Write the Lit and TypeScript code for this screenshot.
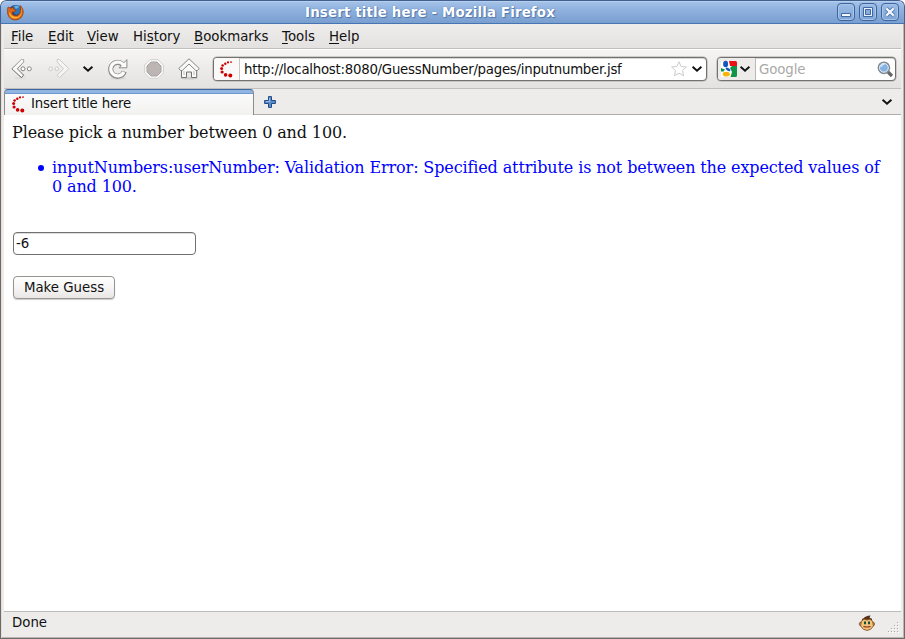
import { LitElement, html, css, svg } from "lit";
import { customElement, property } from "lit/decorators.js";

const loaderDots = svg`<g fill="#cc0000">
  <circle cx="5.3" cy="2.8" r="1.2"/><circle cx="8" cy="1.4" r="1.1"/><circle cx="11" cy="1.1" r=".9"/>
  <circle cx="2.6" cy="4.5" r="1.3"/><circle cx="1.6" cy="7.6" r="1.5"/><circle cx="2.1" cy="11" r="1.6"/>
  <circle cx="5.6" cy="13.9" r="1.8"/><circle cx="10.3" cy="14.6" r="2"/></g>`;

@customElement("ui-icon")
class UiIcon extends LitElement {
  @property() name = "";
  static styles = css`
    :host { display: block; flex: none; }
    svg { display: block; width: 100%; height: 100%; overflow: visible; }
  `;
  shape() {
    switch (this.name) {
      case "firefox": return svg`<svg viewBox="0 0 17 17">
        <circle cx="8.5" cy="8" r="7" fill="#1e4782"/><path d="M6 2q6-2 8 2v5l-5 2-4-4z" fill="#2f75b5"/><path d="M7 2q4-1 5 1L9 5z" fill="#68b4df"/>
        <path d="M1 3Q0 6 .7 10Q2.5 16 9 16Q15.7 15 16.3 8Q16.4 4.5 13.2 1.4Q14.2 7 12.8 9.2Q11 12.5 7.5 11.5Q4.8 10.7 5 8.2L8 7.8L8.8 6L6.6 5.2L6.4 3L4 4.3Z" fill="#dc6517" stroke="#97390d" stroke-width=".7"/>
        <path d="M2 10Q4 15 9 14.5Q14.5 13.5 15 7Q15.3 5 14.5 4Q15 9 12.7 11.4Q10 14 6 12.3Q3 11 3 7.5z" fill="#ffb52c"/></svg>`;
      case "back": return svg`<svg viewBox="0 0 22 22"><defs><linearGradient id="a" x2="0" y2="1"><stop stop-color="#aaa"/><stop offset="1" stop-color="#555"/></linearGradient></defs>
        <ellipse cx="9" cy="20" rx="6" ry="1.3" fill="#ddd"/>
        <path d="M10.3 1.5L.8 10.8L10.3 19.5L12.7 17.2L6.3 10.8L12.7 4V1.5Z" fill="#f8f8f7" stroke="url(#a)" stroke-width="1"/>
        <circle cx="12" cy="10.8" r="2" fill="#fff" stroke="#858585"/><circle cx="18.3" cy="10.8" r="2" fill="#fff" stroke="#858585"/></svg>`;
      case "forward": return svg`<svg viewBox="0 0 22 22"><g fill="#f5f5f4" stroke="#cbcbc9"><path d="M11.5 1.5L20.8 10.8L11.5 19.5L9.2 17.2L15.5 10.8L9.2 4V1.5Z"/><circle cx="2.7" cy="10.8" r="1.8"/><circle cx="8.8" cy="10.8" r="1.8"/></g></svg>`;
      case "reload": return svg`<svg viewBox="0 0 22 22"><ellipse cx="11" cy="20.4" rx="8" ry="1.3" fill="#d8d8d6"/>
        <path d="M15.6 6.6A6.9 6.9 0 1 0 17.2 13.4" fill="none" stroke="#8b8b89" stroke-width="5.2"/>
        <path d="M12 9.8H19.9V1.6Z" fill="#fbfbfa" stroke="#8b8b89" stroke-linejoin="round"/>
        <path d="M17 8.2A6.9 6.9 0 1 0 16.9 14" fill="none" stroke="#fbfbfa" stroke-width="3.2"/></svg>`;
      case "stop": return svg`<svg viewBox="0 0 20 20"><path d="M6 .6H14L19.4 6V14L14 19.4H6L.6 14V6Z" fill="#f8f8f8" stroke="#d2d2d0"/><path d="M7 3H13L17 7V13L13 17H7L3 13V7Z" fill="#bdb4b4" stroke="#aaa4a4"/></svg>`;
      case "home": return svg`<svg viewBox="0 0 22 22"><ellipse cx="11" cy="20.3" rx="9" ry="1.2" fill="#ccc"/>
        <path d="M3.5 11.5V19.5H8.5V14H13.5V19.5H18.7V11L11 4Z" fill="#fafafa" stroke="#70706e"/><path d="M.8 10.5L11 .8L21.2 10.5L19.4 12.5H17.8L11 6L4.2 12.5H2.5Z" fill="#fafafa" stroke="#858583"/><path d="M6 13V17M16 13V17" fill="none" stroke="#bbb"/></svg>`;
      case "chevron": return svg`<svg viewBox="0 0 10 6"><path d="M.6 .8L5 4.7L9.4 .8" fill="none" stroke="#111" stroke-width="2"/></svg>`;
      case "loader": return svg`<svg viewBox="0 0 13 17">${loaderDots}</svg>`;
      case "star": return svg`<svg viewBox="0 0 16 16"><path d="M8 .8L10.2 5.5L15.4 6L11.5 9.6L12.6 14.8L8 12.2L3.4 14.8L4.5 9.6L.6 6L5.8 5.5Z" fill="#fff" stroke="#cbcbcb"/></svg>`;
      case "google": return svg`<svg viewBox="0 0 16 16"><path d="M0 0H14.5Q16 0 16 1.5V14.5Q16 16 14.5 16H0Z" fill="#fff"/><path d="M8 0H14.5Q16 0 16 1.5V5H9Z" fill="#e11"/><path d="M11 5H16V14.5Q16 16 14.5 16H9.5L11 11L9 7Z" fill="#109447"/><path d="M0 7L4 8.5L2.5 10.5H0Z" fill="#109447"/>
        <ellipse cx="4.6" cy="3" rx="2.5" ry="3.3" fill="#1458bd"/><ellipse cx="7" cy="8.4" rx="2.7" ry="1.4" transform="rotate(32 7 8.4)" fill="#1458bd"/><ellipse cx="5.3" cy="13.2" rx="3.5" ry="2.4" fill="#f5b50b"/></svg>`;
      case "search": return svg`<svg viewBox="0 0 17 17"><path d="M10.5 10.5L15 15" stroke="#666" stroke-width="3.2"/><circle cx="6.9" cy="6.8" r="5.5" fill="#86b3e4" stroke="#858b91" stroke-width="1.7"/><circle cx="6.9" cy="6.8" r="4.4" fill="none" stroke="#e5eff9"/><path d="M3.8 6Q4.6 3 7.5 3.3" fill="none" stroke="#cde3f8" stroke-width="1.6"/></svg>`;
      case "plus": return svg`<svg viewBox="0 0 12 12"><path d="M4.5.6H7.5V4.5H11.4V7.5H7.5V11.4H4.5V7.5H.6V4.5H4.5Z" fill="#5c8dcb" stroke="#204a87" stroke-linejoin="round"/><path d="M5.5 2V5.5H2" fill="none" stroke="#9bbde5"/></svg>`;
      case "monkey": return svg`<svg viewBox="0 0 16 16"><path d="M5 3Q6 1 11.5.5L10.5 2.7L13 3.7V6H3V4Z" fill="#562f19"/><circle cx="2" cy="9" r="1.8" fill="#d69a51" stroke="#704019" stroke-width=".7"/><circle cx="13.8" cy="9" r="1.8" fill="#d69a51" stroke="#704019" stroke-width=".7"/>
        <path d="M2.4 6Q5 3 8 5Q11 3 13.6 6L14.4 11Q12 15.4 8 15.4T1.6 11Z" fill="#f2c47a" stroke="#88501f" stroke-width=".9"/><path d="M5 6.4H7V9.3H5ZM9 6.4H11V9.3H9Z" fill="#164d3d"/><path d="M4.4 11.5Q8 12.5 11.6 11.5" fill="none" stroke="#8e2b20" stroke-width="1.1"/></svg>`;
      case "grip": return svg`<svg viewBox="0 0 12 12">${[[9,0],[6,3],[9,3],[3,6],[6,6],[9,6],[0,9],[3,9],[6,9],[9,9]].map(([x,y]) => svg`<path d="M${x} ${y}h1v1h-1z" fill="#aaa9a6"/><path d="M${x+1} ${y+1}h1v1h-1z" fill="#fff"/>`)}</svg>`;
      case "minimize": return svg`<svg viewBox="0 0 18 18"><path d="M4.5 10.5H13.5V13.5H4.5Z" fill="#f4f8fd" stroke="#3e69a6"/></svg>`;
      case "maximize": return svg`<svg viewBox="0 0 18 18"><path d="M4.5 4.5H13.5V13.5H4.5Z" fill="#e7f0fa" stroke="#3e69a6"/><path d="M6.5 6.5H11.5V11.5H6.5Z" fill="#87acdb" stroke="#3e69a6"/></svg>`;
      case "close": return svg`<svg viewBox="0 0 18 18"><path d="M5.3 5.3L12.7 12.7M12.7 5.3L5.3 12.7" stroke="#3e69a6" stroke-width="4"/><path d="M5.3 5.3L12.7 12.7M12.7 5.3L5.3 12.7" stroke="#edf4fc" stroke-width="2.4"/></svg>`;
    }
    return svg``;
  }
  render() { return this.shape(); }
}

@customElement("app-root")
class AppRoot extends LitElement {
  static styles = css`
    :host { display: block; width: 905px; height: 639px; background: #fff; font: 13.333px/17px "DejaVu Sans", sans-serif; color: #111; }
    * { box-sizing: border-box; }
    .window { height: 639px; display: flex; flex-direction: column; border-radius: 6px 6px 0 0; overflow: hidden; background: #edeceb; }
    .titlebar { height: 24px; flex: none; display: flex; align-items: center; border: 1px solid #41608e; border-bottom-color: #4775b2; border-radius: 6px 6px 0 0; background: linear-gradient(#a6c4ea, #91b3df 35%, #799fd0); box-shadow: inset 0 1px #b6cfef; padding: 0 5px 0 6px; gap: 4px; }
    .logo { width: 17px; height: 17px; }
    .title { flex: 1; text-align: center; color: #fff; font-weight: bold; letter-spacing: .17px; text-shadow: 1px 1px 1px #4f75aa, 0 0 1px #4f75aa; padding-right: 1px; white-space: nowrap; }
    .control { width: 18px; height: 18px; border: 1px solid #3b649f; border-radius: 4px; box-shadow: inset 0 0 0 1px #abc6e9; background: linear-gradient(#9cbce5, #7da4d6); }
    .control ui-icon { margin: -1px; width: 18px; height: 18px; }
    .body { flex: 1; min-height: 0; display: flex; flex-direction: column; border: solid #6c6b69; border-width: 0 1px 1px; padding: 0 3px; box-shadow: inset 1px 0 #e3dedb, inset -1px -1px #b9b7b4; }
    .menu { height: 25px; flex: none; display: grid; grid-template-columns: 37px 39px 46px 61px 88px 47px auto; padding: 4px 0 0 7px; border-bottom: 1px solid #c0bfbc; background: linear-gradient(#eeedeb, #e3e2e0); }
    .menu u { text-underline-offset: 2px; text-decoration-thickness: 1px; }
    .toolbar { height: 40px; flex: none; display: flex; align-items: center; padding: 0 5px 0 7px; border-top: 1px solid #fff; border-bottom: 1px solid #c1bfbd; background: linear-gradient(#f6f5f4, #e4e2e0); }
    .nav { width: 22px; height: 22px; margin-right: 15px; }
    .forward { margin-right: 13px; }
    .chevron { width: 10px; height: 6px; }
    .history { margin-right: 14px; }
    .stop { width: 20px; height: 20px; margin-right: 14px; }
    .home { margin-right: 13px; }
    .field { flex: none; height: 24px; border: 1px solid #72716e; border-radius: 4px; background: #fff; display: flex; align-items: center; box-shadow: inset 0 1px #d7d7d5, 0 0 0 .5px #aaa9a5; overflow: hidden; }
    .address { width: 494px; padding-right: 4px; margin-right: 10px; }
    .site { width: 26px; height: 22px; padding: 3px 0 0 6px; border-right: 1px solid #c8c7c5; background: #faf9f8; }
    .loader { width: 13px; height: 17px; }
    .url { flex: 1; min-width: 0; padding-left: 4px; letter-spacing: -.26px; white-space: nowrap; }
    .star { width: 16px; height: 16px; margin-right: 5px; }
    .search { width: 179px; padding-right: 1px; }
    .engine { width: 38px; height: 22px; display: flex; align-items: center; gap: 3px; padding-left: 3px; border-right: 1px solid #b9b8b6; background: #edeceb; }
    .google { width: 16px; height: 16px; }
    .placeholder { flex: 1; padding-left: 3px; color: #aaa9a7; letter-spacing: -.1px; }
    .glass { width: 17px; height: 17px; }
    .tabs { height: 26px; flex: none; display: flex; align-items: center; border-bottom: 1px solid #b0aeab; padding-right: 9px; }
    .tab { width: 250px; height: 26px; display: flex; align-items: center; padding: 2px 7px 0; gap: 6px; letter-spacing: -.16px; border: 1px solid #8d8c8a; border-top: 1px solid #3e669e; border-bottom: 0; border-radius: 4px 4px 0 0; background: linear-gradient(#91b5e2 0 3px, #6f97cc 3px 4px, #fbfbfb 4px, #f2f1f0); align-self: flex-start; }
    .tab .loader { margin-top: 2px; }
    .plus { width: 12px; height: 12px; margin: 0 auto 0 10px; }
    .page { flex: 1; min-height: 0; background: #fff; padding: 8px; font: 16px/19px "DejaVu Serif", serif; letter-spacing: -.125px; }
    .prompt { margin: 0 0 16px; }
    .errors { margin: 0; padding-left: 40px; color: #00f; list-style: none; }
    .errors li { position: relative; }
    .errors li::before { content: ""; position: absolute; left: -14px; top: 7px; width: 6px; height: 6px; border-radius: 50%; background: #00f; }
    .number { display: block; width: 183px; height: 23px; margin: 36px 0 21px 1px; padding: 0 2px; font: 13.333px "DejaVu Sans", sans-serif; color: #111; border: 1px solid #72716f; border-radius: 4px; background: #fff; box-shadow: inset 0 1px #ddd; }
    .guess { display: block; width: 102px; height: 23px; margin-left: 1px; padding: 0 0 1px; font: 13.333px "DejaVu Sans", sans-serif; color: #111; border: 1px solid #969592; border-radius: 4px; background: linear-gradient(#fff, #f6f5f4 50%, #e8e7e6); box-shadow: 0 1px 1px #ccc; white-space: nowrap; }
    .status { height: 27px; flex: none; display: flex; align-items: center; border-top: 1px solid #bcbbb8; padding: 0 1px 5px 8px; }
    .monkey { width: 16px; height: 16px; margin: 1px 13px 0 auto; }
    .grip { width: 12px; height: 12px; align-self: flex-end; margin-bottom: -1px; }
  `;
  menuItem(label: string, key: number) {
    return html`<span>${label.slice(0, key)}<u>${label[key]}</u>${label.slice(key + 1)}</span>`;
  }
  render() {
    return html`<div class="window">
      <header class="titlebar"><ui-icon class="logo" name="firefox"></ui-icon><div class="title">Insert title here - Mozilla Firefox</div>
        ${["minimize", "maximize", "close"].map(n => html`<div class="control"><ui-icon name=${n}></ui-icon></div>`)}</header>
      <div class="body">
        <nav class="menu">${this.menuItem("File", 0)}${this.menuItem("Edit", 0)}${this.menuItem("View", 0)}${this.menuItem("History", 2)}${this.menuItem("Bookmarks", 0)}${this.menuItem("Tools", 0)}${this.menuItem("Help", 0)}</nav>
        <div class="toolbar">
          <ui-icon class="nav" name="back"></ui-icon><ui-icon class="nav forward" name="forward"></ui-icon><ui-icon class="chevron history" name="chevron"></ui-icon>
          <ui-icon class="nav" name="reload"></ui-icon><ui-icon class="stop" name="stop"></ui-icon><ui-icon class="nav home" name="home"></ui-icon>
          <div class="field address"><div class="site"><ui-icon class="loader" name="loader"></ui-icon></div><span class="url">http://localhost:8080/GuessNumber/pages/inputnumber.jsf</span><ui-icon class="star" name="star"></ui-icon><ui-icon class="chevron" name="chevron"></ui-icon></div>
          <div class="field search"><div class="engine"><ui-icon class="google" name="google"></ui-icon><ui-icon class="chevron" name="chevron"></ui-icon></div><span class="placeholder">Google</span><ui-icon class="glass" name="search"></ui-icon></div>
        </div>
        <div class="tabs"><div class="tab"><ui-icon class="loader" name="loader"></ui-icon><span>Insert title here</span></div><ui-icon class="plus" name="plus"></ui-icon><ui-icon class="chevron" name="chevron"></ui-icon></div>
        <main class="page"><p class="prompt">Please pick a number between 0 and 100.</p>
          <ul class="errors"><li>inputNumbers:userNumber: Validation Error: Specified attribute is not between the expected values of 0 and 100.</li></ul>
          <input class="number" .value=${"-6"}><button class="guess">Make Guess</button></main>
        <footer class="status"><span>Done</span><ui-icon class="monkey" name="monkey"></ui-icon><ui-icon class="grip" name="grip"></ui-icon></footer>
      </div></div>`;
  }
}
